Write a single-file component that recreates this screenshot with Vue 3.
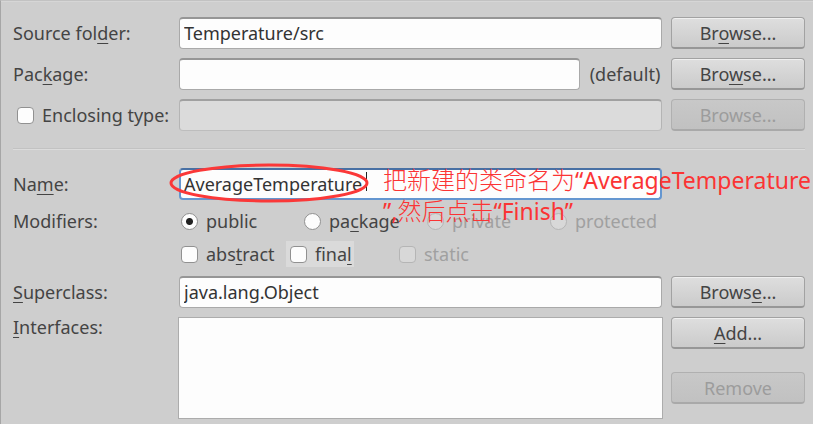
<script setup>
import { ref } from 'vue'

const sourceFolder = ref('Temperature/src')
const packageName = ref('')
const enclosing = ref(false)
const className = ref('AverageTemperature')
const access = ref('public')
const isAbstract = ref(false)
const isFinal = ref(false)
const superclass = ref('java.lang.Object')
</script>

<template>
  <form class="dialog" @submit.prevent>
    <div class="row">
      <label for="source">Source fol<u>d</u>er:</label>
      <input id="source" v-model="sourceFolder" class="field" type="text" />
      <button type="button" class="btn">Br<u>o</u>wse...</button>
    </div>
    <div class="row">
      <label for="package">Pac<u>k</u>age:</label>
      <div class="with-hint">
        <input id="package" v-model="packageName" class="field" type="text" />
        <span class="hint">(default)</span>
      </div>
      <button type="button" class="btn">Bro<u>w</u>se...</button>
    </div>
    <div class="row">
      <label class="choice enclosing">
        <input v-model="enclosing" type="checkbox" class="tick" />
        <span>Enclosing type:</span>
      </label>
      <input class="field" type="text" aria-label="Enclosing type" disabled />
      <button type="button" class="btn" disabled>Browse...</button>
    </div>

    <hr class="rule" />

    <div class="row">
      <label for="name">Na<u>m</u>e:</label>
      <div class="name-cell">
        <input id="name" v-model="className" class="field active" type="text" />
        <svg class="ring" viewBox="0 0 204 42" width="204" height="42" aria-hidden="true">
          <path d="M199.500 10V29" stroke="#222" stroke-width="1" />
          <ellipse cx="102" cy="21" rx="98" ry="18" fill="none" stroke="#fb3838" stroke-width="3" />
        </svg>
        <p class="note">
          <span class="han">把新建的类命名为</span>“AverageTemperature<br />”,<span class="han">然后点击</span>“Finish”
        </p>
      </div>
    </div>
    <div class="row">
      <span>Modifiers:</span>
      <div class="radios">
        <label class="choice"><input v-model="access" type="radio" name="access" value="public" class="tick" /><span>public</span></label>
        <label class="choice"><input v-model="access" type="radio" name="access" value="package" class="tick" /><span>pa<u>c</u>kage</span></label>
        <label class="choice off"><input type="radio" name="access" value="private" class="tick" disabled /><span>private</span></label>
        <label class="choice off"><input type="radio" name="access" value="protected" class="tick" disabled /><span>protected</span></label>
      </div>
    </div>
    <div class="row">
      <span></span>
      <div class="checks">
        <label class="choice"><input v-model="isAbstract" type="checkbox" class="tick" /><span>abs<u>t</u>ract</span></label>
        <label class="choice hover"><input v-model="isFinal" type="checkbox" class="tick" /><span>fina<u>l</u></span></label>
        <label class="choice off"><input type="checkbox" class="tick" disabled /><span>static</span></label>
      </div>
    </div>
    <div class="row">
      <label for="super"><u>S</u>uperclass:</label>
      <input id="super" v-model="superclass" class="field" type="text" />
      <button type="button" class="btn">Brows<u>e</u>...</button>
    </div>
    <div class="row top">
      <label for="interfaces"><u>I</u>nterfaces:</label>
      <select id="interfaces" class="list" multiple></select>
      <div class="stack">
        <button type="button" class="btn"><u>A</u>dd...</button>
        <button type="button" class="btn" disabled>Remove</button>
      </div>
    </div>
  </form>
</template>

<style>
body {
  margin: 0;
  background: #cecece;
}
</style>

<style scoped>
.dialog {
  box-sizing: border-box;
  min-height: 100vh;
  display: flex;
  flex-direction: column;
  gap: 9px;
  padding: 16px 8px 6px 12px;
  border-left: 1px solid #a6a6a6;
  border-top: 1px solid #c2c2c2;
  box-shadow: inset 0 1px #d6d6d6;
  background: #cecece;
  color: #444;
  font: 18px/24px "Noto Sans", "Open Sans", sans-serif;
}
.row {
  display: grid;
  grid-template-columns: 157px minmax(0, 1fr) 134px;
  column-gap: 9px;
  align-items: center;
  white-space: nowrap;
}
.row.top {
  align-items: start;
  line-height: 20px;
}
u {
  text-decoration-thickness: 1px;
  text-underline-offset: 3px;
  text-decoration-skip-ink: none;
}
.field {
  box-sizing: border-box;
  width: 100%;
  min-width: 0;
  height: 32px;
  padding: 0 4px 2px;
  border: 1px solid #a9a9a9;
  border-top: 2px solid #969696;
  border-radius: 4px;
  background: #fdfdfd;
  color: #333;
  font: inherit;
  outline: none;
}
.field:disabled {
  background: #dbdbdb;
  border-color: #a0a0a0 #b4b4b4 #bdbdbd;
}
.field.active {
  border: 2px solid #6496d0;
  border-top-color: #4870a4;
  padding: 0 3px;
}
.with-hint {
  display: flex;
  align-items: center;
  gap: 8px;
}
.hint {
  flex: none;
  min-width: 74px;
  text-align: center;
}
.btn {
  box-sizing: border-box;
  height: 32px;
  padding: 0;
  border: 1px solid #a2a2a2;
  border-bottom: 2px solid #979797;
  border-radius: 4px;
  background: linear-gradient(#dedede, #cbcbcb);
  box-shadow: inset 0 1px #efefef;
  color: #444;
  font: inherit;
}
.btn:disabled {
  background: linear-gradient(#c8c8c8, #c1c1c1);
  border-color: #b0b0b0 #b0b0b0 #a9a9a9;
  box-shadow: none;
  color: #9c9c9c;
}
.rule {
  width: 100%;
  margin: 8px 0 9px;
  border: 0;
  border-top: 1px solid #c2c2c2;
  border-bottom: 1px solid #dcdcdc;
}
.choice {
  display: flex;
  align-items: center;
  gap: 8px;
}
.enclosing {
  padding-left: 4px;
}
.off {
  color: #a0a0a0;
}
.tick {
  appearance: none;
  box-sizing: border-box;
  flex: none;
  width: 17px;
  height: 17px;
  margin: 0;
  border: 1px solid #919191;
  border-radius: 4px;
  background: #fdfdfd;
}
.tick[type="radio"] {
  border-radius: 50%;
}
.tick[type="radio"]:checked {
  background: radial-gradient(circle, #222 3px, #fdfdfd 4px);
}
.tick[type="checkbox"]:checked {
  background: #555;
}
.tick:disabled {
  border-color: #b5b5b5;
  background: #d8d8d8;
}
.radios,
.checks {
  display: grid;
  padding-left: 2px;
}
.radios {
  grid-template-columns: repeat(3, 1fr) 112px;
}
.checks {
  grid-template-columns: repeat(3, 109px);
  padding-bottom: 1px;
}
.hover {
  justify-self: start;
  margin: -1px -4px;
  padding: 1px 2px 1px 4px;
  background: #dadada;
}
.list {
  box-sizing: border-box;
  height: 102px;
  margin: 0 -1px;
  padding: 0;
  border: 1px solid #acacac;
  border-radius: 0;
  background: #fdfdfd;
  outline: none;
}
.stack {
  display: flex;
  flex-direction: column;
  gap: 23px;
}
.name-cell {
  position: relative;
  display: flex;
}
.ring {
  position: absolute;
  left: -12px;
  top: -6px;
  pointer-events: none;
}
.note {
  position: absolute;
  z-index: 1;
  left: 204px;
  top: -4px;
  margin: 0;
  color: #fb3434;
  font: 23px/30px "Noto Sans", "Noto Sans CJK SC", sans-serif;
  pointer-events: none;
}
.han {
  font-family: "Noto Sans CJK SC", sans-serif;
  font-size: 24px;
  font-weight: 300;
}
</style>
